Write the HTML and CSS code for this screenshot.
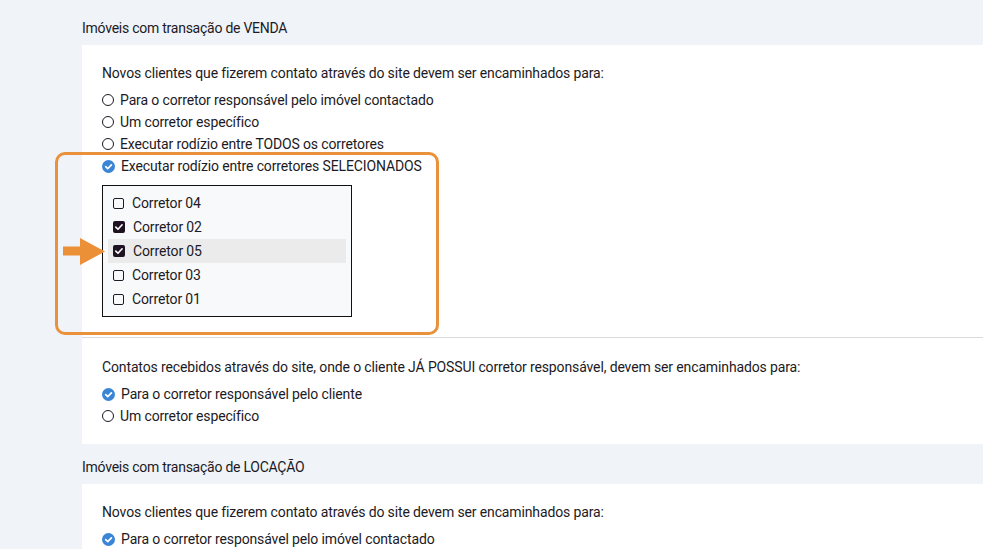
FILE: index.html
```html
<!DOCTYPE html>
<html lang="pt-BR">

<head>
    <meta charset="UTF-8">
    <meta name="viewport" content="width=device-width, initial-scale=1.0">
    <title>Distribuição de contatos</title>
    <link rel="stylesheet" href="styles.css">
</head>

<body>
    <main class="page">
        <section class="group">
            <h2 class="group-title">Imóveis com transação de VENDA</h2>
            <div class="panel">
                <div class="block block-first">
                    <p class="question">Novos clientes que fizerem contato através do site devem ser encaminhados para:</p>
                    <ul class="options">
                        <li class="option"><span class="radio"></span>Para o corretor responsável pelo imóvel contactado</li>
                        <li class="option"><span class="radio"></span>Um corretor específico</li>
                        <li class="option"><span class="radio"></span>Executar rodízio entre TODOS os corretores</li>
                        <li class="option">
                            <svg class="radio-on" viewBox="0 0 13 13"><circle cx="6.5" cy="6.5" r="6.5" fill="#3a85d6"/><path d="M3.7 6.7l2 2 3.7-3.9" fill="none" stroke="#fff" stroke-width="1.7" stroke-linecap="round" stroke-linejoin="round"/></svg>
                            Executar rodízio entre corretores SELECIONADOS
                        </li>
                    </ul>

                    <ul class="broker-list">
                        <li class="broker"><span class="check"></span>Corretor 04</li>
                        <li class="broker">
                            <svg class="check-on" viewBox="0 0 12 12"><rect width="12" height="12" rx="2" fill="#1d1222"/><path d="M2.8 6.1l2.2 2.2 4.1-4.5" fill="none" stroke="#fff" stroke-width="1.6" stroke-linecap="round" stroke-linejoin="round"/></svg>
                            Corretor 02
                        </li>
                        <li class="broker broker-active">
                            <svg class="check-on" viewBox="0 0 12 12"><rect width="12" height="12" rx="2" fill="#1d1222"/><path d="M2.8 6.1l2.2 2.2 4.1-4.5" fill="none" stroke="#fff" stroke-width="1.6" stroke-linecap="round" stroke-linejoin="round"/></svg>
                            Corretor 05
                        </li>
                        <li class="broker"><span class="check"></span>Corretor 03</li>
                        <li class="broker"><span class="check"></span>Corretor 01</li>
                    </ul>

                    <!-- destaque da captura -->
                    <div class="highlight"></div>
                    <svg class="pointer" viewBox="0 0 42 27"><rect x="0" y="8.5" width="19" height="9" fill="#ec9038"/><polygon points="17,0 42,13.5 17,27" fill="#ec9038"/></svg>
                </div>

                <div class="block block-last">
                    <p class="question">Contatos recebidos através do site, onde o cliente JÁ POSSUI corretor responsável, devem ser encaminhados para:</p>
                    <ul class="options">
                        <li class="option">
                            <svg class="radio-on" viewBox="0 0 13 13"><circle cx="6.5" cy="6.5" r="6.5" fill="#3a85d6"/><path d="M3.7 6.7l2 2 3.7-3.9" fill="none" stroke="#fff" stroke-width="1.7" stroke-linecap="round" stroke-linejoin="round"/></svg>
                            Para o corretor responsável pelo cliente
                        </li>
                        <li class="option"><span class="radio"></span>Um corretor específico</li>
                    </ul>
                </div>
            </div>
        </section>

        <section class="group">
            <h2 class="group-title">Imóveis com transação de LOCAÇÃO</h2>
            <div class="panel">
                <div class="block block-first">
                    <p class="question">Novos clientes que fizerem contato através do site devem ser encaminhados para:</p>
                    <ul class="options">
                        <li class="option">
                            <svg class="radio-on" viewBox="0 0 13 13"><circle cx="6.5" cy="6.5" r="6.5" fill="#3a85d6"/><path d="M3.7 6.7l2 2 3.7-3.9" fill="none" stroke="#fff" stroke-width="1.7" stroke-linecap="round" stroke-linejoin="round"/></svg>
                            Para o corretor responsável pelo imóvel contactado
                        </li>
                        <li class="option"><span class="radio"></span>Um corretor específico</li>
                    </ul>
                </div>
            </div>
        </section>
    </main>
</body>

</html>
```

FILE: styles.css
```css
html,
body {
    margin: 0;
    padding: 0;
    background-color: #f0f3f8;
    font-family: Roboto, "Liberation Sans", sans-serif;
    font-size: 14px;
    letter-spacing: -0.13px;
    color: #1c1a24;
}

.page {
    padding: 5px 0 0 82px;
    overflow: hidden;
}

.group-title {
    margin: 0;
    padding: 13px 0 7px;
    font-size: 14px;
    font-weight: 400;
    line-height: 20px;
    letter-spacing: -0.25px;
}

.panel {
    background-color: #fff;
}

.block {
    position: relative;
    padding: 18px 20px 20px;
}

.block-first + .block {
    border-top: 1px solid #dadada;
}

.block-last {
    padding: 19px 20px 17px;
}

.question {
    margin: 0;
    line-height: 20px;
}

.options {
    list-style: none;
    margin: 6px 0 0;
    padding: 0;
}

.option {
    display: flex;
    align-items: center;
    gap: 6px;
    height: 22px;
}

.radio {
    width: 10px;
    height: 10px;
    border: 1.5px solid #1c1a24;
    border-radius: 50%;
    flex-shrink: 0;
}

.radio-on {
    width: 13px;
    height: 13px;
    flex-shrink: 0;
}

.broker-list {
    list-style: none;
    width: 238px;
    margin: 8px 0 0;
    padding: 5px;
    border: 1px solid #111;
    background-color: #f8f9fb;
}

.broker {
    display: flex;
    align-items: center;
    gap: 8px;
    height: 24px;
    padding-left: 5px;
}

.broker-active {
    background-color: #ebebeb;
}

.check {
    width: 9px;
    height: 9px;
    border: 1.5px solid #1c1a24;
    border-radius: 2px;
    flex-shrink: 0;
}

.check-on {
    width: 12px;
    height: 12px;
    flex-shrink: 0;
}

.highlight {
    position: absolute;
    left: -27px;
    top: 107px;
    width: 384px;
    height: 183px;
    box-sizing: border-box;
    border: 3px solid #e9913b;
    border-radius: 10px;
    pointer-events: none;
}

.pointer {
    position: absolute;
    left: -19px;
    top: 193px;
    width: 42px;
    height: 27px;
}
```
